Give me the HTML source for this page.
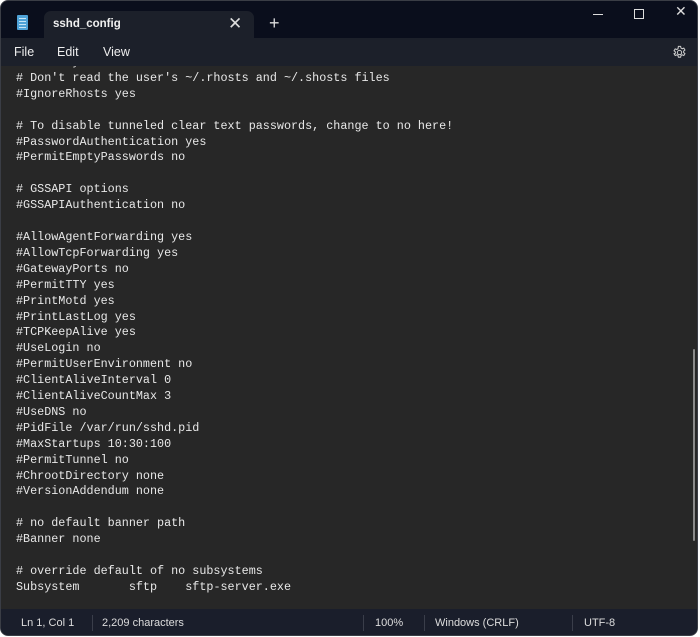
<!DOCTYPE html>
<html><head><meta charset="utf-8"><style>
html,body{margin:0;padding:0;background:#fff;width:700px;height:637px;overflow:hidden}
.win{position:absolute;left:0;top:0;width:698px;height:636px;border-radius:8px;overflow:hidden;background:#0a0e1c;border:1px solid #3a3d45;box-sizing:border-box}
.tab{position:absolute;left:43px;top:10px;width:210px;height:28px;background:#1c202a;border-radius:7px 7px 0 0}
.tab .t{position:absolute;left:9px;top:7px;font:bold 11.5px "Liberation Sans",sans-serif;color:#f0f0f0}
.tab .x{position:absolute;left:184px;top:3px;font:17px "Liberation Sans",sans-serif;color:#ddd}
.plus{position:absolute;left:268px;top:12px;font:18px "Liberation Sans",sans-serif;color:#ddd}
.icon{position:absolute;left:16px;top:14px;width:11px;height:15px;background:#4fa3d8;border-radius:1px}
.icon i{position:absolute;left:2px;width:7px;height:1px;background:#c8e6f7}
.menu{position:absolute;left:0;top:37px;width:100%;height:28px;background:#1c202a}
.menu span{position:absolute;top:7px;font:12.5px "Liberation Sans",sans-serif;color:#eee}
.ed{position:absolute;left:0;top:65px;width:100%;height:543px;background:#272727;overflow:hidden}
pre{position:absolute;left:15px;top:-11px;margin:0;font:11.75px/15.9px "Liberation Mono",monospace;color:#e8e8e8;tab-size:8;-moz-tab-size:8}
.sb{position:absolute;left:692px;top:283px;width:2px;height:192px;background:#8a8a8a;border-radius:1px}
.st{position:absolute;left:0;top:608px;width:100%;height:28px;background:#1a1e2b}
.st span{position:absolute;top:8px;font:11px "Liberation Sans",sans-serif;color:#ddd}
.st b{position:absolute;top:6px;width:1px;height:16px;background:#3a3e4a}
.wc{position:absolute;top:5px;color:#ddd;font:14px "Liberation Sans",sans-serif}
</style></head><body>
<div class="win">
<div class="icon"><i style="top:3px"></i><i style="top:6px"></i><i style="top:9px"></i><i style="top:12px"></i></div>
<div class="tab"><span class="t">sshd_config</span><span class="x">✕</span></div>
<div class="plus">+</div>
<div style="position:absolute;left:592px;top:13px;width:10px;height:1px;background:#ddd"></div>
<div style="position:absolute;left:633px;top:8px;width:8px;height:8px;border:1px solid #ddd"></div>
<div class="wc" style="left:674px;top:2px">✕</div>
<div class="menu"><span style="left:13px">File</span><span style="left:56px">Edit</span><span style="left:102px">View</span>
<svg style="position:absolute;left:671px;top:7px" width="15" height="15" viewBox="0 0 16 16" fill="none" stroke="#ccc" stroke-width="1.1"><circle cx="8" cy="8" r="2.3"/><path d="M6.8 1.5h2.4l.4 1.8 1.3.7 1.7-.7 1.2 2-1.4 1.2v1.5l1.4 1.2-1.2 2-1.7-.7-1.3.7-.4 1.8H6.8l-.4-1.8-1.3-.7-1.7.7-1.2-2L3.6 8.8V7.3L2.2 6.1l1.2-2 1.7.7 1.3-.7z"/></svg></div>
<div class="ed"><pre>#UseDNS yes
# Don't read the user's ~/.rhosts and ~/.shosts files
#IgnoreRhosts yes

# To disable tunneled clear text passwords, change to no here!
#PasswordAuthentication yes
#PermitEmptyPasswords no

# GSSAPI options
#GSSAPIAuthentication no

#AllowAgentForwarding yes
#AllowTcpForwarding yes
#GatewayPorts no
#PermitTTY yes
#PrintMotd yes
#PrintLastLog yes
#TCPKeepAlive yes
#UseLogin no
#PermitUserEnvironment no
#ClientAliveInterval 0
#ClientAliveCountMax 3
#UseDNS no
#PidFile /var/run/sshd.pid
#MaxStartups 10:30:100
#PermitTunnel no
#ChrootDirectory none
#VersionAddendum none

# no default banner path
#Banner none

# override default of no subsystems
Subsystem	sftp	sftp-server.exe</pre><div class="sb"></div></div>
<div class="st"><span style="left:20px">Ln 1, Col 1</span><b style="left:91px"></b><span style="left:101px">2,209 characters</span><b style="left:362px"></b><span style="left:374px">100%</span><b style="left:423px"></b><span style="left:434px">Windows (CRLF)</span><b style="left:571px"></b><span style="left:583px">UTF-8</span></div>
</div>
</body></html>
